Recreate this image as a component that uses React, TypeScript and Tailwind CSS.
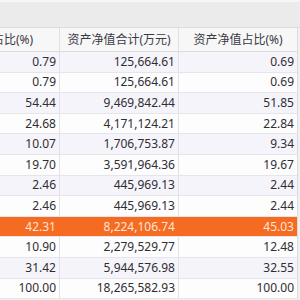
const rows = [
  ["0.79", "125,664.61", "0.69"],
  ["0.79", "125,664.61", "0.69"],
  ["54.44", "9,469,842.44", "51.85"],
  ["24.68", "4,171,124.21", "22.84"],
  ["10.07", "1,706,753.87", "9.34"],
  ["19.70", "3,591,964.36", "19.67"],
  ["2.46", "445,969.13", "2.44"],
  ["2.46", "445,969.13", "2.44"],
  ["42.31", "8,224,106.74", "45.03"],
  ["10.90", "2,279,529.77", "12.48"],
  ["31.42", "5,944,576.98", "32.55"],
  ["100.00", "18,265,582.93", "100.00"],
];

export default function App() {
  return (
    <div
      className="h-[300px] w-[300px] overflow-hidden bg-[#f0f0f0] text-[12px] text-[#2e2e33]"
      style={{ fontFamily: '"Noto Sans", "Noto Sans CJK SC", sans-serif' }}
    >
      <div className="h-[28px] border-t-2 border-b border-t-[#f6f6f6] border-b-[#dcdcdc] bg-[#ebebeb]" />
      <div className="flex w-[298px] flex-col border-r border-[#dcdcdc]">
        <div className="flex h-[24px] border-b border-[#dcdcdc] bg-[#f7f7f7] text-[#3a3a45]">
          <div className="ml-[-82px] flex w-[142px] shrink-0 items-center justify-center border-r border-[#e0e0e0]">
            资产总值占比(%)
          </div>
          <div className="flex w-[119px] shrink-0 items-center justify-center border-r border-[#e0e0e0]">
            资产净值合计(万元)
          </div>
          <div className="flex flex-1 items-center justify-center">资产净值占比(%)</div>
        </div>
        {rows.map((r, i) => {
          const hot = i === 8;
          const bg = hot ? "bg-[#f46b21] text-[#fde6d8]" : i % 2 === 0 ? "bg-[#f6f4fb]" : "bg-[#fdfdfe]";
          return (
            <div key={i} className={`flex h-[20.6px] border-b border-[#e6e6ea] ${bg}`}>
              <div className={`flex w-[60px] shrink-0 items-center justify-end pr-[3px] ${hot ? "border-r border-[#f46b21]" : "border-r border-[#e2e2e6]"}`}>
                {r[0]}
              </div>
              <div className={`flex w-[119px] shrink-0 items-center justify-end pr-[3px] ${hot ? "border-r border-[#f46b21]" : "border-r border-[#e2e2e6]"}`}>
                {r[1]}
              </div>
              <div className="flex flex-1 items-center justify-end pr-[3px]">{r[2]}</div>
            </div>
          );
        })}
      </div>
    </div>
  );
}
